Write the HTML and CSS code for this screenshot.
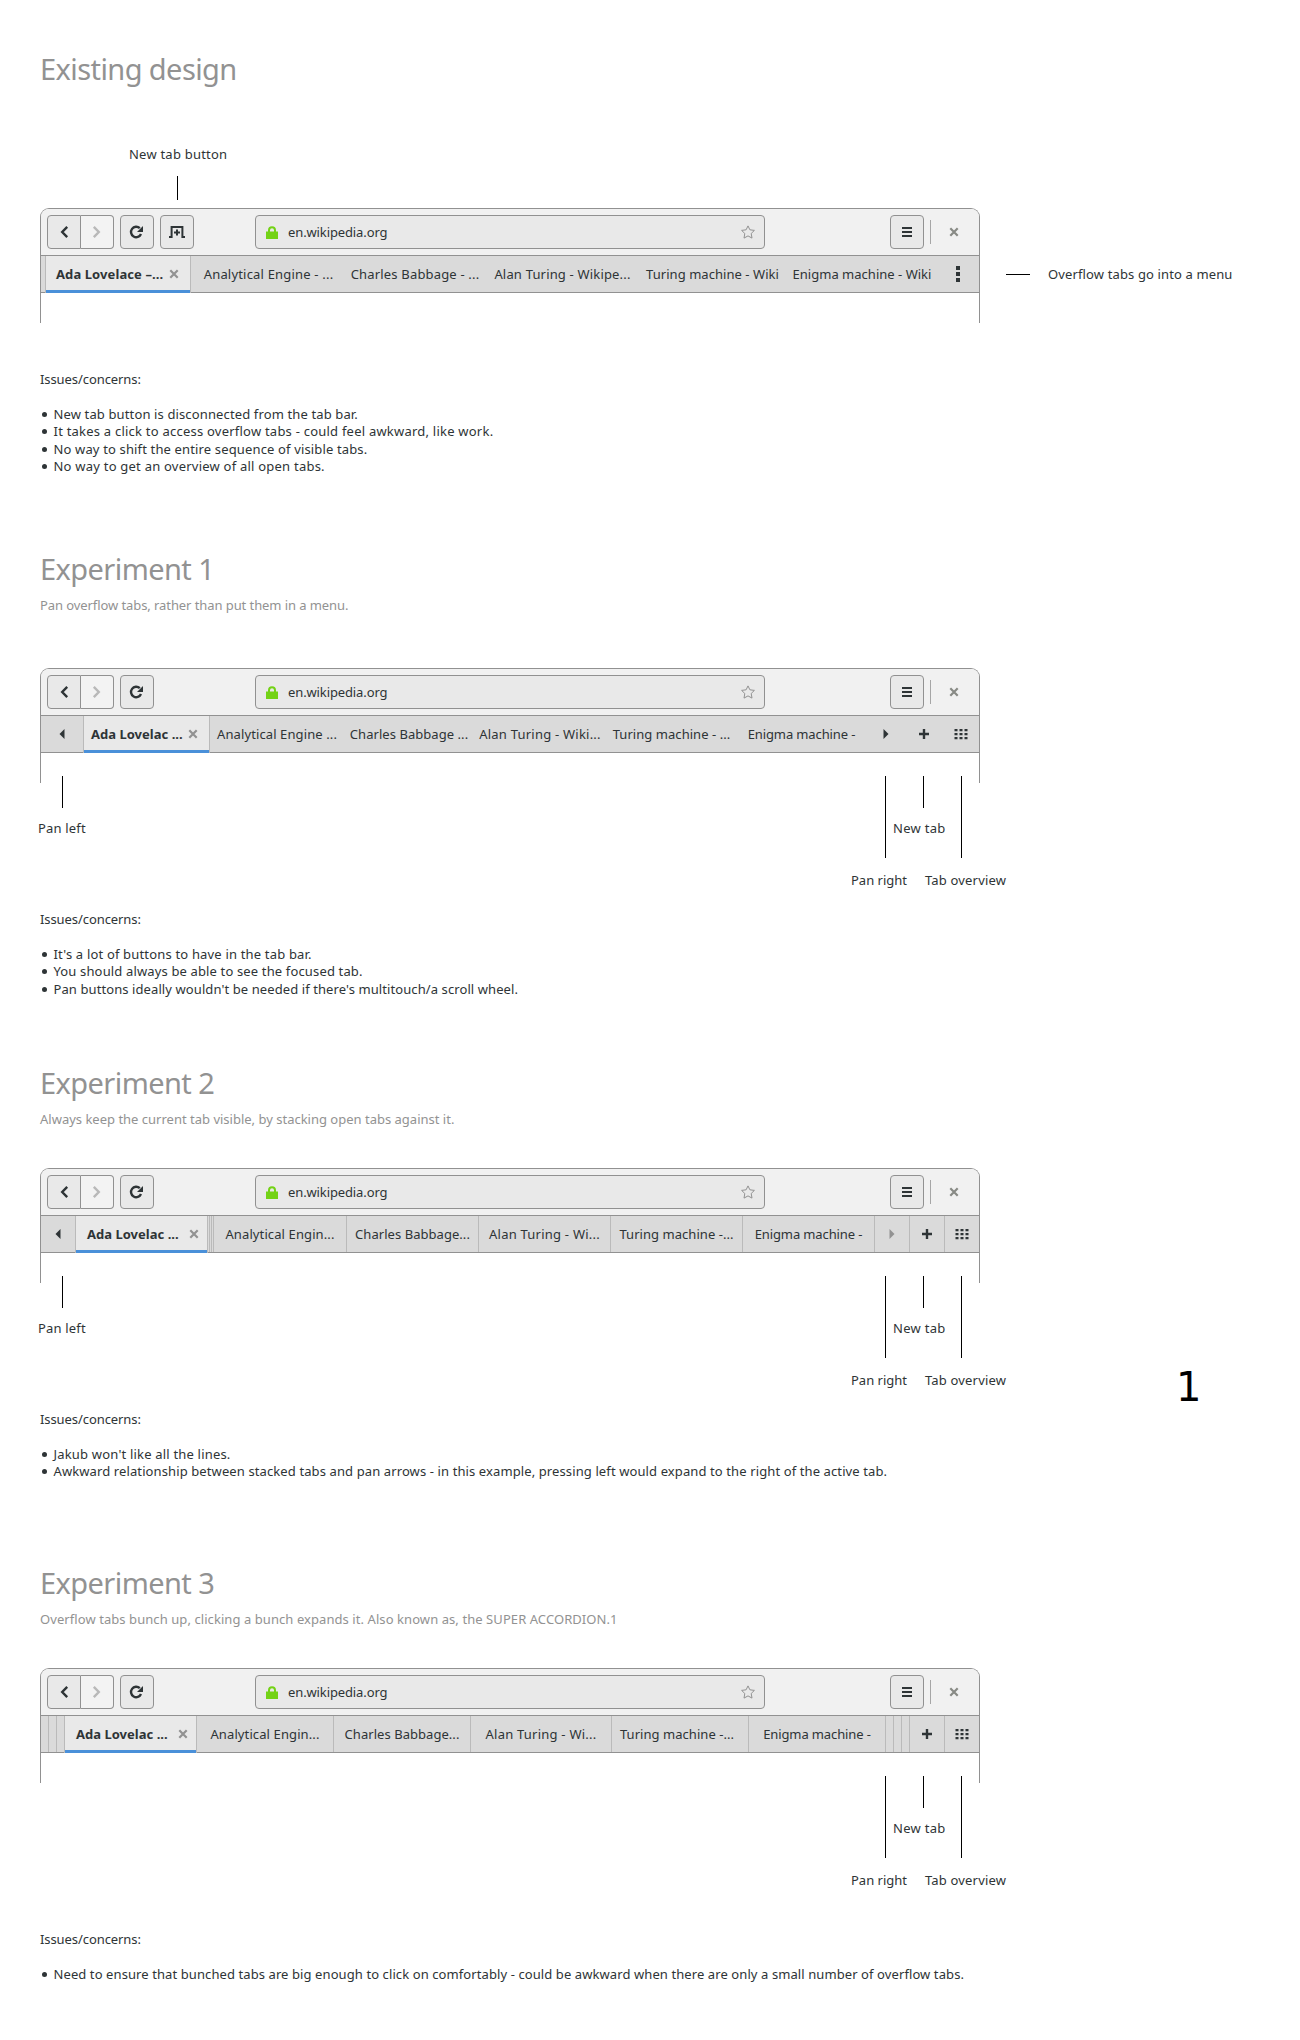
FILE: index.html
```
<!DOCTYPE html>
<html lang="en">
<head>
<meta charset="utf-8">
<title>Tab bar experiments</title>
<link rel="stylesheet" href="styles.css">
</head>
<body>
<svg class="defs" width="0" height="0">
  <symbol id="back" viewBox="0 0 16 16"><path d="M11.2 2.8 6.2 8l5 5.2" fill="none" stroke="currentColor" stroke-width="2.4"/></symbol>
  <symbol id="forward" viewBox="0 0 16 16"><path d="m4.8 2.8 5 5.2-5 5.2" fill="none" stroke="currentColor" stroke-width="2.4"/></symbol>
  <symbol id="reload" viewBox="0 0 16 16"><path d="M12 10A5.2 5.2 0 1 1 10.8 4.2" fill="none" stroke="currentColor" stroke-width="2.4"/><path d="M14 2v6H8z" fill="currentColor"/></symbol>
  <symbol id="newtab" viewBox="0 0 16 16"><path d="M0 13h2.6V3h10.8v10H16" fill="none" stroke="currentColor" stroke-width="2"/><path d="M8 5.5v6M5 8.5h6" stroke="currentColor" stroke-width="2"/></symbol>
  <symbol id="lock" viewBox="0 0 12 13"><path d="M0 5.6h12V13H0z" fill="currentColor"/><path d="M3 7V4.2Q3 1.2 6 1.2T9 4.2V7" fill="none" stroke="currentColor" stroke-width="2"/></symbol>
  <symbol id="star" viewBox="0 0 14 14"><path d="m7 .9 1.9 3.9 4.5.6-3.2 3.1.8 4.6-4-2.2-4 2.2.8-4.6L.6 5.4l4.5-.6z" fill="none" stroke="currentColor" stroke-linejoin="round"/></symbol>
  <symbol id="menu" viewBox="0 0 16 16"><path d="M3 3h10v2H3zM3 7h10v2H3zM3 11h10v2H3z" fill="currentColor"/></symbol>
  <symbol id="close" viewBox="0 0 16 16"><path d="m4.3 4.3 7.4 7.4m0-7.4-7.4 7.4" stroke="currentColor" stroke-width="2.2"/></symbol>
  <symbol id="dots" viewBox="0 0 16 16"><path d="M6 0h4v4H6zM6 6h4v4H6zM6 12h4v4H6z" fill="currentColor"/></symbol>
  <symbol id="left" viewBox="0 0 16 16"><path d="M10.5 3v10L5.5 8z" fill="currentColor"/></symbol>
  <symbol id="right" viewBox="0 0 16 16"><path d="M5.5 3v10l5-5z" fill="currentColor"/></symbol>
  <symbol id="plus" viewBox="0 0 16 16"><path d="M8 3v10M3 8h10" stroke="currentColor" stroke-width="2.4"/></symbol>
  <symbol id="grid" viewBox="0 0 16 16"><path d="M1.5 3h3v2.3h-3zM6.5 3h3v2.3h-3zM11.5 3h3v2.3h-3zM1.5 7h3v2.3h-3zM6.5 7h3v2.3h-3zM11.5 7h3v2.3h-3zM1.5 11h3v2.3h-3zM6.5 11h3v2.3h-3zM11.5 11h3v2.3h-3z" fill="currentColor"/></symbol>
</svg>

<section class="study study--existing">
  <h1>Existing design</h1>
  <div class="stage">
    <div class="window">
      <div class="toolbar">
        <div class="nav"><i class="btn"><svg><use href="#back"/></svg></i><i class="btn off"><svg><use href="#forward"/></svg></i></div>
        <i class="btn"><svg><use href="#reload"/></svg></i>
        <i class="btn"><svg><use href="#newtab"/></svg></i>
        <div class="url"><svg class="lock"><use href="#lock"/></svg><span>en.wikipedia.org</span><svg class="star"><use href="#star"/></svg></div>
        <i class="btn"><svg><use href="#menu"/></svg></i>
        <hr><svg class="close"><use href="#close"/></svg>
      </div>
      <div class="tabs tabs--existing">
        <i></i>
        <b class="active"><span class="k9">Ada Lovelace –...</span><svg><use href="#close"/></svg></b>
        <i><span class="k19">Analytical Engine - ...</span></i>
        <i><span class="k17">Charles Babbage - ...</span></i>
        <i><span class="k17">Alan Turing - Wikipe...</span></i>
        <i><span class="k5">Turing machine - Wiki</span></i>
        <i><span class="k1">Enigma machine - Wiki</span></i>
        <i><svg><use href="#dots"/></svg></i>
      </div>
    </div>
    <div class="note newtab-button"><span class="k22">New tab button</span></div>
    <div class="note overflow-menu"><span class="k13">Overflow tabs go into a menu</span></div>
  </div>
  <div class="issues">
    <p>Issues/concerns:</p>
    <ul>
      <li><span class="k13">New tab button is disconnected from the tab bar.</span></li>
      <li><span class="k22">It takes a click to access overflow tabs - could feel awkward, like work.</span></li>
      <li><span class="k15">No way to shift the entire sequence of visible tabs.</span></li>
      <li><span class="k22">No way to get an overview of all open tabs.</span></li>
    </ul>
  </div>
</section>

<section class="study study--one">
  <h1>Experiment 1</h1>
  <h2 class="k-8">Pan overflow tabs, rather than put them in a menu.</h2>
  <div class="stage">
    <div class="window">
      <div class="toolbar">
        <div class="nav"><i class="btn"><svg><use href="#back"/></svg></i><i class="btn off"><svg><use href="#forward"/></svg></i></div>
        <i class="btn"><svg><use href="#reload"/></svg></i>
        <div class="url"><svg class="lock"><use href="#lock"/></svg><span>en.wikipedia.org</span><svg class="star"><use href="#star"/></svg></div>
        <i class="btn"><svg><use href="#menu"/></svg></i>
        <hr><svg class="close"><use href="#close"/></svg>
      </div>
      <div class="tabs tabs--one">
        <i><svg><use href="#left"/></svg></i>
        <b class="active"><span class="k1">Ada Lovelac ...</span><svg><use href="#close"/></svg></b>
        <i><span class="k11">Analytical Engine ...</span></i>
        <i><span class="k5">Charles Babbage ...</span></i>
        <i><span class="k22">Alan Turing - Wiki...</span></i>
        <i><span class="k5">Turing machine - ...</span></i>
        <i><span class="k-11">Enigma machine -</span></i>
        <i><svg><use href="#right"/></svg></i>
        <i><svg><use href="#plus"/></svg></i>
        <i><svg><use href="#grid"/></svg></i>
      </div>
    </div>
    <div class="note pan-left"><span class="k17">Pan left</span></div>
    <div class="note pan-right"><span>Pan right</span></div>
    <div class="note new-tab"><span class="k29">New tab</span></div>
    <div class="note overview"><span class="k17">Tab overview</span></div>
  </div>
  <div class="issues">
    <p>Issues/concerns:</p>
    <ul>
      <li><span class="k17">It's a lot of buttons to have in the tab bar.</span></li>
      <li><span class="k15">You should always be able to see the focused tab.</span></li>
      <li><span class="k9">Pan buttons ideally wouldn't be needed if there's multitouch/a scroll wheel.</span></li>
    </ul>
  </div>
</section>

<section class="study study--two">
  <h1>Experiment 2</h1>
  <h2>Always keep the current tab visible, by stacking open tabs against it.</h2>
  <div class="stage">
    <div class="window">
      <div class="toolbar">
        <div class="nav"><i class="btn"><svg><use href="#back"/></svg></i><i class="btn off"><svg><use href="#forward"/></svg></i></div>
        <i class="btn"><svg><use href="#reload"/></svg></i>
        <div class="url"><svg class="lock"><use href="#lock"/></svg><span>en.wikipedia.org</span><svg class="star"><use href="#star"/></svg></div>
        <i class="btn"><svg><use href="#menu"/></svg></i>
        <hr><svg class="close"><use href="#close"/></svg>
      </div>
      <div class="tabs tabs--two lined">
        <i><svg><use href="#left"/></svg></i>
        <b class="active"><span class="k1">Ada Lovelac ...</span><svg><use href="#close"/></svg></b>
        <i></i><i></i><i></i>
        <i><span class="k11">Analytical Engin...</span></i>
        <i><span class="k5">Charles Babbage...</span></i>
        <i><span class="k22">Alan Turing - Wi...</span></i>
        <i><span class="k5">Turing machine -...</span></i>
        <i><span class="k-11">Enigma machine -</span></i>
        <i class="off"><svg><use href="#right"/></svg></i>
        <i><svg><use href="#plus"/></svg></i>
        <i><svg><use href="#grid"/></svg></i>
      </div>
    </div>
    <div class="note pan-left"><span class="k17">Pan left</span></div>
    <div class="note pan-right"><span>Pan right</span></div>
    <div class="note new-tab"><span class="k29">New tab</span></div>
    <div class="note overview"><span class="k17">Tab overview</span></div>
    <div class="stray">1</div>
  </div>
  <div class="issues">
    <p>Issues/concerns:</p>
    <ul>
      <li><span class="k19">Jakub won't like all the lines.</span></li>
      <li><span class="k11">Awkward relationship between stacked tabs and pan arrows - in this example, pressing left would expand to the right of the active tab.</span></li>
    </ul>
  </div>
</section>

<section class="study study--three">
  <h1>Experiment 3</h1>
  <h2 class="k8">Overflow tabs bunch up, clicking a bunch expands it. Also known as, the SUPER ACCORDION.1</h2>
  <div class="stage">
    <div class="window">
      <div class="toolbar">
        <div class="nav"><i class="btn"><svg><use href="#back"/></svg></i><i class="btn off"><svg><use href="#forward"/></svg></i></div>
        <i class="btn"><svg><use href="#reload"/></svg></i>
        <div class="url"><svg class="lock"><use href="#lock"/></svg><span>en.wikipedia.org</span><svg class="star"><use href="#star"/></svg></div>
        <i class="btn"><svg><use href="#menu"/></svg></i>
        <hr><svg class="close"><use href="#close"/></svg>
      </div>
      <div class="tabs tabs--three lined">
        <i></i><i></i><i></i>
        <b class="active"><span class="k1">Ada Lovelac ...</span><svg><use href="#close"/></svg></b>
        <i><span class="k11">Analytical Engin...</span></i>
        <i><span class="k5">Charles Babbage...</span></i>
        <i><span class="k22">Alan Turing - Wi...</span></i>
        <i class="nudged"><span class="k5">Turing machine -...</span></i>
        <i><span class="k-11">Enigma machine -</span></i>
        <i></i><i></i><i></i>
        <i><svg><use href="#plus"/></svg></i>
        <i><svg><use href="#grid"/></svg></i>
      </div>
    </div>
    <div class="note pan-right"><span>Pan right</span></div>
    <div class="note new-tab"><span class="k29">New tab</span></div>
    <div class="note overview"><span class="k17">Tab overview</span></div>
  </div>
  <div class="issues">
    <p>Issues/concerns:</p>
    <ul>
      <li><span class="k9">Need to ensure that bunched tabs are big enough to click on comfortably - could be awkward when there are only a small number of overflow tabs.</span></li>
    </ul>
  </div>
</section>
</body>
</html>
```
FILE: styles.css
```
* { box-sizing: border-box; }
body { margin: 0; width: 1300px; height: 2040px; overflow: hidden; background: #fff; color: #2e3436; font: 13px/17.5px "Noto Sans", sans-serif; display: flex; flex-direction: column; white-space: nowrap; }
i { font-style: normal; }
svg { width: 16px; height: 16px; display: block; flex: none; }
.defs { position: absolute; width: 0; height: 0; }

/* Tracking steps, in hundredths of a pixel. */
.k-11 { letter-spacing: -.117px; }
.k-8 { letter-spacing: -.08px; }
.k1 { letter-spacing: .016px; }
.k5 { letter-spacing: .05px; }
.k8 { letter-spacing: .072px; }
.k9 { letter-spacing: .091px; }
.k11 { letter-spacing: .108px; }
.k13 { letter-spacing: .13px; }
.k15 { letter-spacing: .145px; }
.k17 { letter-spacing: .174px; }
.k19 { letter-spacing: .19px; }
.k22 { letter-spacing: .225px; }
.k29 { letter-spacing: .293px; }

.study { flex: none; height: 500px; padding: 48px 0 0 40px; }
.study--one { height: 514px; }
h1, h2 { width: max-content; font-weight: 400; color: #929292; }
h1 { margin: 0; height: 52px; font-size: 29px; line-height: 41px; letter-spacing: -.58px; }
h2 { margin: -5px 0 0; height: 20px; font-size: 13px; line-height: 20px; }
.stage { position: relative; width: 940px; height: 115px; margin-top: 108px; }
.study--one .stage { margin-top: 53px; }
.study--two .stage, .study--three .stage { margin-top: 39px; }

.window { height: 115px; border: 1px solid #919191; border-bottom: 0; border-radius: 9px 9px 0 0; overflow: hidden; }
.toolbar { height: 46px; padding: 6px; display: flex; background: #f1f1f1; }
.btn { width: 34px; height: 34px; display: grid; place-items: center; background: #e9e9e9; border: 1px solid #919191; border-radius: 4px; }
.toolbar > .btn { margin-left: 6px; }
.nav { display: flex; }
.nav .btn:first-child { border-radius: 4px 0 0 4px; }
.nav .off { width: 33px; padding-right: 1px; border-left: 0; border-radius: 0 4px 4px 0; background: #f3f3f3; }
.off { color: #b9b9b9; }
.url { width: 510px; height: 34px; margin: 0 119px 0 auto; padding: 0 9px 0 10px; display: flex; align-items: center; background: #e9e9e9; border: 1px solid #919191; border-radius: 4px; }
.url span { padding-top: 1px; letter-spacing: -.118px; }
.lock { width: 12px; height: 13px; margin-right: 10px; color: #73d216; }
.star { width: 14px; height: 14px; margin-left: auto; color: #929292; }
.toolbar hr { width: 1px; height: 24px; margin: 5px 15px 0 6px; border: 0; background: #a6a6a6; }
.close { margin: 9px 11px 0 0; color: #888a85; }

.tabs { height: 38px; display: grid; background: #dadada; border: solid #919191; border-width: 1px 0; }
.tabs > * { height: 36px; display: flex; align-items: center; justify-content: center; font-weight: 400; min-width: 0; }
.tabs span { padding-top: 2px; }
.tabs > .off { color: #929292; }
.tabs .active { height: 37px; padding: 0 8px 1px 10px; justify-content: space-between; font-weight: 700; background: #e9e9e9; border-left: 1px solid #bababa; border-right: 1px solid #bababa; box-shadow: inset 0 -3px #4a90d9; }
.tabs .active svg { color: #929292; }
.tabs--existing { grid-template-columns: 4px 146px 155px 138px 157px 143px 156px 36px; }
.tabs--one { grid-template-columns: 42px 127px 134px 130px 132px 131px 129px 40px 36px 37px; }
.tabs--one .active { padding-left: 7px; }
.tabs--two { grid-template-columns: 34px 133px 2px 2px 2px 133px 132px 132px 132px 132px 35px 35px 34px; }
.tabs--two .active, .tabs--three .active { padding: 0 5px 1px 11px; }
.tabs--three { grid-template-columns: 8px 8px 7px 133px 137px 137px 141px 137px 137px 8px 8px 8px 35px 34px; }
.lined > i { border-right: 1px solid #bababa; }
.lined > i:last-child, .lined > i:has(+ .active) { border-right: 0; }
.nudged { padding-right: 6px; }

/* Callouts: a hairline pointing at the control plus its caption. */
.note { position: absolute; }
.note::before { content: ""; position: absolute; width: 1px; background: #000; }
.newtab-button { left: 89px; top: -62px; }
.newtab-button::before { left: 48px; top: 30px; height: 24px; }
.overflow-menu { left: 1008px; top: 58px; }
.overflow-menu::before { left: -42px; top: 8px; width: 24px; height: 1px; }
.pan-left { left: -2px; top: 152px; }
.pan-left::before { left: 24px; top: -44px; height: 32px; }
.new-tab { left: 853px; top: 152px; }
.new-tab::before { left: 30px; top: -44px; height: 32px; }
.pan-right { left: 811px; top: 204px; }
.pan-right::before { left: 34px; top: -96px; height: 82px; }
.overview { left: 885px; top: 204px; }
.overview::before { left: 36px; top: -96px; height: 82px; }
.stray { position: absolute; left: 1136px; top: 195px; font: 40px/48px "DejaVu Sans", sans-serif; color: #000; }

.issues { margin-top: 47.5px; }
.study--one .issues, .study--two .issues { margin-top: 127.5px; }
.study--three .issues { margin-top: 147.5px; }
.issues p { margin: 0 0 17.5px; width: max-content; letter-spacing: -.08px; }
.issues ul { margin: 0; padding: 0; list-style: none; }
.issues li { display: flex; align-items: center; gap: 6.5px; }
.issues li::before { content: ""; width: 5px; height: 5px; margin-left: 2px; border-radius: 50%; background: #2e3436; }
```
